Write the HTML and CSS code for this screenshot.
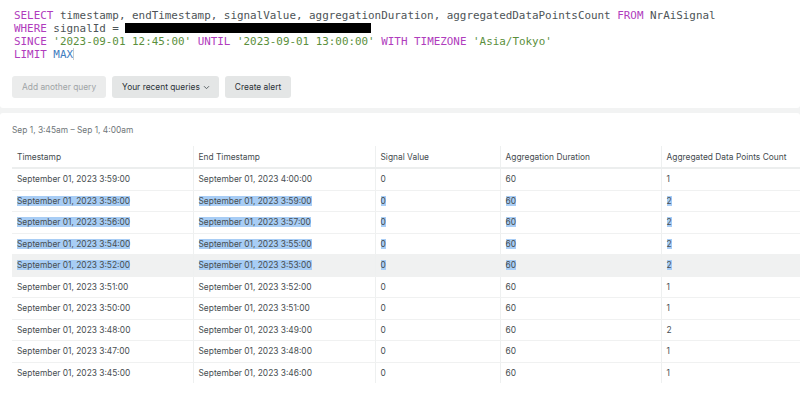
FILE: index.html
```html
<!DOCTYPE html>
<html>
<head>
<meta charset="utf-8">
<link rel="stylesheet" href="styles.css">
</head>
<body>
<div class="editor">
  <div class="code">
    <div class="line"><span class="kw">SELECT</span> timestamp, endTimestamp, signalValue, aggregationDuration, aggregatedDataPointsCount <span class="kw">FROM</span> NrAiSignal</div>
    <div class="line"><span class="kw">WHERE</span> signalId = <span class="redact"></span></div>
    <div class="line"><span class="kw">SINCE</span> <span class="str">'2023-09-01 12:45:00'</span> <span class="kw">UNTIL</span> <span class="str">'2023-09-01 13:00:00'</span> <span class="kw">WITH TIMEZONE</span> <span class="str">'Asia/Tokyo'</span></div>
    <div class="line"><span class="kw">LIMIT</span> <span class="num">MAX</span><span class="cursor"></span></div>
  </div>
  <div class="actions">
    <button class="btn disabled">Add another query</button>
    <button class="btn recent">Your recent queries <svg class="chev" width="7" height="5" viewBox="0 0 7 5"><path d="M1 1.2 L3.5 3.7 L6 1.2" fill="none" stroke="#5c6467" stroke-width="1"/></svg></button>
    <button class="btn">Create alert</button>
  </div>
</div>
<div class="results">
  <div class="range">Sep 1, 3:45am – Sep 1, 4:00am</div>
  <table class="grid">
    <colgroup><col class="c1"><col class="c2"><col class="c3"><col class="c4"><col class="c5"></colgroup>
    <thead>
      <tr><th>Timestamp</th><th>End Timestamp</th><th>Signal Value</th><th>Aggregation Duration</th><th>Aggregated Data Points Count</th></tr>
    </thead>
    <tbody>
      <tr><td>September 01, 2023 3:59:00</td><td>September 01, 2023 4:00:00</td><td>0</td><td>60</td><td>1</td></tr>
      <tr class="sel"><td><span>September 01, 2023 3:58:00</span></td><td><span>September 01, 2023 3:59:00</span></td><td><span>0</span></td><td><span>60</span></td><td><span>2</span></td></tr>
      <tr class="sel"><td><span>September 01, 2023 3:56:00</span></td><td><span>September 01, 2023 3:57:00</span></td><td><span>0</span></td><td><span>60</span></td><td><span>2</span></td></tr>
      <tr class="sel"><td><span>September 01, 2023 3:54:00</span></td><td><span>September 01, 2023 3:55:00</span></td><td><span>0</span></td><td><span>60</span></td><td><span>2</span></td></tr>
      <tr class="sel hover"><td><span>September 01, 2023 3:52:00</span></td><td><span>September 01, 2023 3:53:00</span></td><td><span>0</span></td><td><span>60</span></td><td><span>2</span></td></tr>
      <tr><td>September 01, 2023 3:51:00</td><td>September 01, 2023 3:52:00</td><td>0</td><td>60</td><td>1</td></tr>
      <tr><td>September 01, 2023 3:50:00</td><td>September 01, 2023 3:51:00</td><td>0</td><td>60</td><td>1</td></tr>
      <tr><td>September 01, 2023 3:48:00</td><td>September 01, 2023 3:49:00</td><td>0</td><td>60</td><td>2</td></tr>
      <tr><td>September 01, 2023 3:47:00</td><td>September 01, 2023 3:48:00</td><td>0</td><td>60</td><td>1</td></tr>
      <tr class="last"><td>September 01, 2023 3:45:00</td><td>September 01, 2023 3:46:00</td><td>0</td><td>60</td><td>1</td></tr>
    </tbody>
  </table>
</div>
</body>
</html>
```

FILE: styles.css
```css
html, body {
  margin: 0;
  padding: 0;
  background: #f2f3f3;
  overflow: hidden;
}
body {
  width: 800px;
  height: 409px;
  font-family: Inter, "Noto Sans", sans-serif;
}
.editor {
  background: #ffffff;
  height: 108px;
  box-sizing: border-box;
  padding: 9px 0 0 14px;
  border-radius: 0 0 3px 3px;
}
.code {
  font-family: "DejaVu Sans Mono", monospace;
  font-size: 10.9px;
  line-height: 13px;
  color: #4d5457;
}
.line {
  white-space: pre;
  height: 13px;
}
.kw { color: #b03cbd; }
.str { color: #5b8f3c; }
.num { color: #3f7dc0; }
.redact {
  display: inline-block;
  width: 246px;
  height: 10px;
  background: #000;
  vertical-align: -1px;
}
.cursor {
  display: inline-block;
  width: 1px;
  height: 12px;
  background: #c9ccce;
  vertical-align: -2px;
}
.actions {
  display: flex;
  gap: 6px;
  margin: 15px 0 0 -2px;
}
.btn {
  height: 22px;
  border: none;
  border-radius: 3px;
  background: #e4e6e6;
  color: #2a3236;
  font-family: Inter, "Noto Sans", sans-serif;
  font-size: 8.4px;
  padding: 0 10px;
  display: flex;
  align-items: center;
  gap: 4px;
}
.btn.recent {
  padding-right: 9px;
  gap: 3px;
}
.btn.disabled {
  background: #ebecec;
  color: #9fa4a6;
}
.chev { margin-top: 1px; }
.results {
  background: #ffffff;
  margin-top: 5px;
  height: 296px;
  padding: 0 0 0 12px;
  border-radius: 3px 3px 0 0;
  overflow: hidden;
}
.range {
  padding-top: 11px;
  font-size: 8.4px;
  line-height: 12px;
  color: #6f7679;
  height: 22px;
}
.grid {
  border-collapse: collapse;
  width: 788px;
  table-layout: fixed;
  font-size: 8.4px;
  color: #474e51;
}
.c1 { width: 181px; }
.c2 { width: 182px; }
.c3 { width: 125px; }
.c4 { width: 161px; }
.grid th {
  text-align: left;
  font-weight: 400;
  color: #454c4f;
  height: 21px;
  padding: 0 5px;
  border-bottom: 2px solid #eceeee;
  border-left: 1px solid #eef0f0;
}
.grid td {
  height: 20.5px;
  padding: 0 5px;
  border-bottom: 1px solid #f0f1f1;
  border-left: 1px solid #eef0f0;
  white-space: nowrap;
}
.grid th:first-child, .grid td:first-child { border-left: none; }
.grid tr.last td { border-bottom: none; }
.grid tr.sel span { background: #a8cdf5; }
.grid tr.hover td { background: #f0f1f1; }
```
